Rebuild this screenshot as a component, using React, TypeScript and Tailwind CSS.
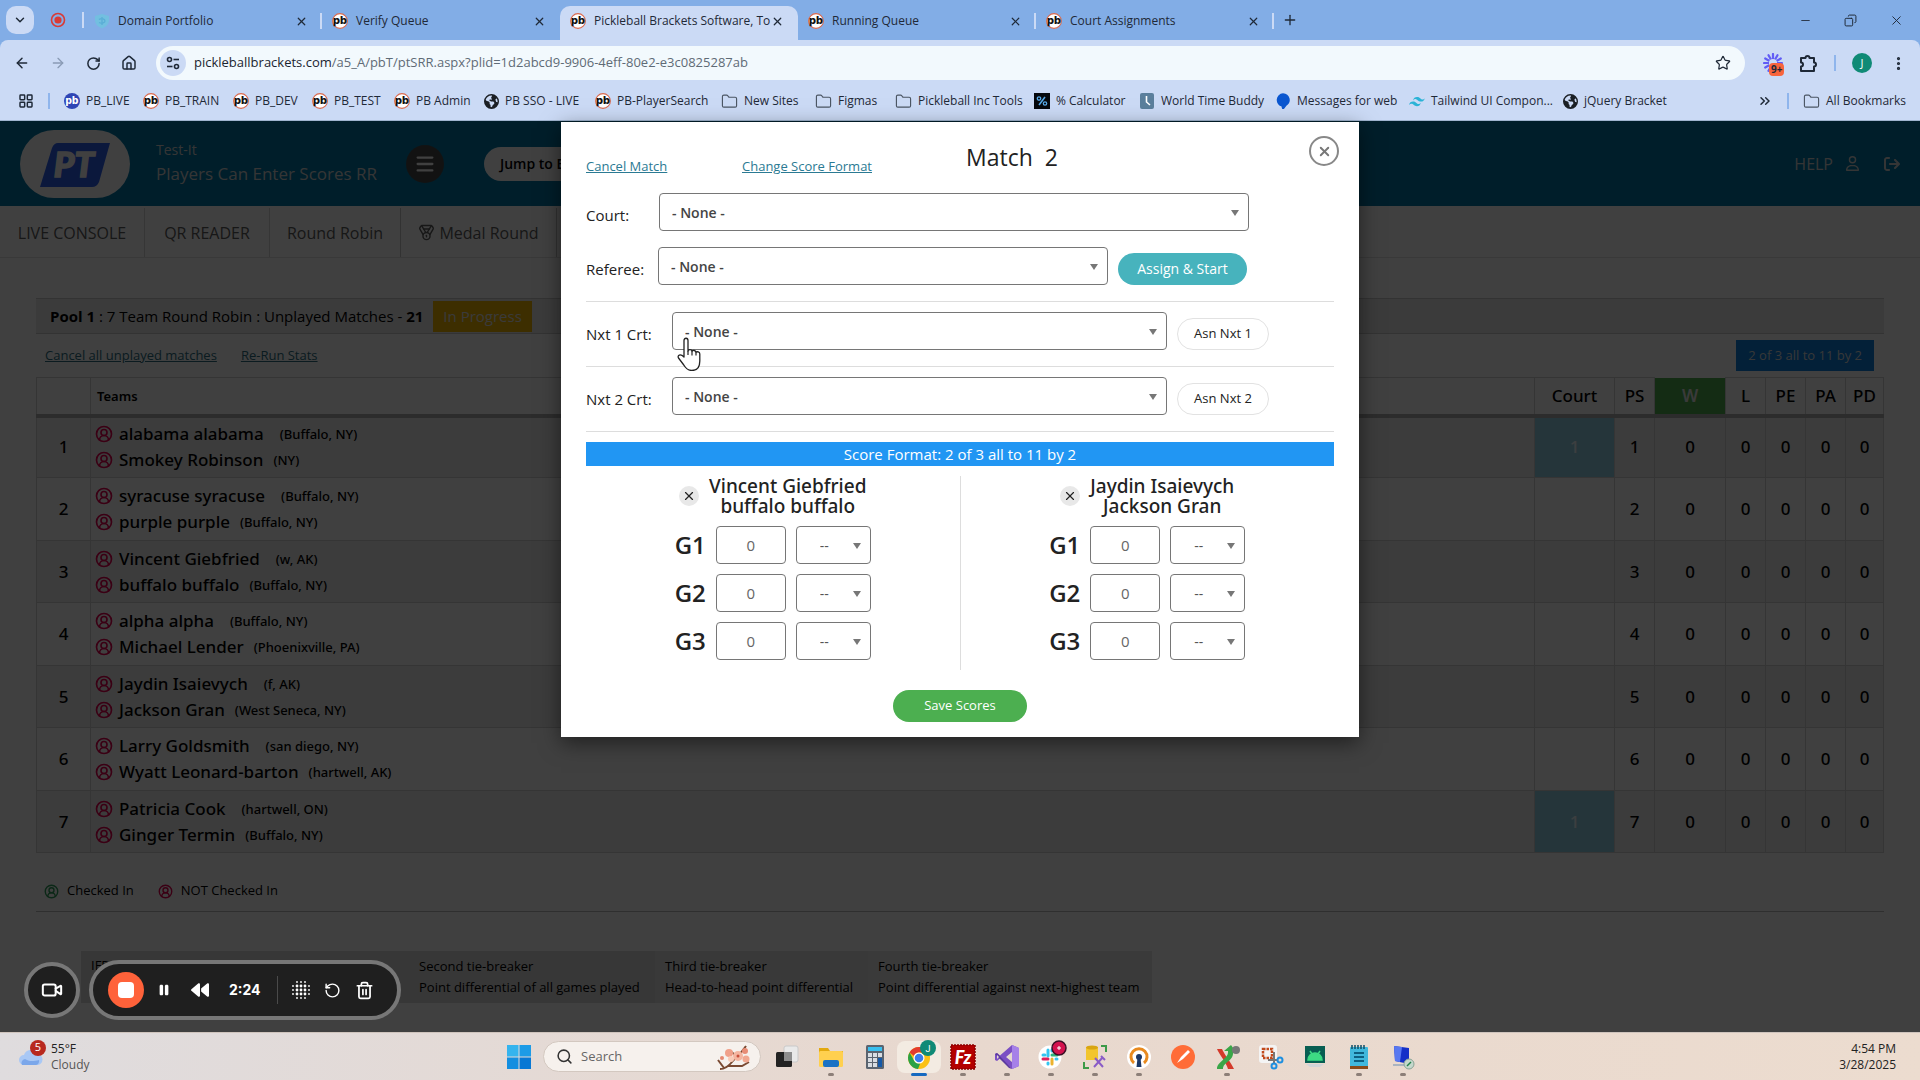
import { useState } from 'react'
import type { ReactNode } from 'react'
import {
  ArrowLeft, ArrowRight, ChevronDown, ChevronsRight, CircleUserRound, Copy, EllipsisVertical, Folder, House,
  LayoutGrid, Medal, Menu, Minus, Plus, RotateCcw, RotateCw, Search, Star, Trash2, Video, X,
} from 'lucide-react'
import { FaArrowRightFromBracket, FaRegUser, FaBackward, FaPause, FaEarthAmericas } from 'react-icons/fa6'

const tabs = [
  { title: 'Domain Portfolio', icon: 'shield' },
  { title: 'Verify Queue', icon: 'pb' },
  { title: 'Pickleball Brackets Software, To', icon: 'pb', active: true },
  { title: 'Running Queue', icon: 'pb' },
  { title: 'Court Assignments', icon: 'pb' },
]

const bookmarks = [
  { label: 'PB_LIVE', icon: 'pblive', w: 'w-[79px]' },
  { label: 'PB_TRAIN', icon: 'pb', w: 'w-[90px]' },
  { label: 'PB_DEV', icon: 'pb', w: 'w-[79px]' },
  { label: 'PB_TEST', icon: 'pb', w: 'w-[82px]' },
  { label: 'PB Admin', icon: 'pb', w: 'w-[90px]' },
  { label: 'PB SSO - LIVE', icon: 'globe', w: 'w-[111px]' },
  { label: 'PB-PlayerSearch', icon: 'pb', w: 'w-[126px]' },
  { label: 'New Sites', icon: 'folder', w: 'w-[94px]' },
  { label: 'Figmas', icon: 'folder', w: 'w-[80px]' },
  { label: 'Pickleball Inc Tools', icon: 'folder', w: 'w-[139px]' },
  { label: '% Calculator', icon: 'percent', w: 'w-[105px]' },
  { label: 'World Time Buddy', icon: 'clock', w: 'w-[136px]' },
  { label: 'Messages for web', icon: 'messages', w: 'w-[134px]' },
  { label: 'Tailwind UI Compon...', icon: 'tailwind', w: 'w-[154px]' },
  { label: 'jQuery Bracket', icon: 'globe', w: 'w-[110px]' },
]

const teams = [
  { players: [['alabama alabama', '(Buffalo, NY)'], ['Smokey Robinson', '(NY)']], court: '1' },
  { players: [['syracuse syracuse', '(Buffalo, NY)'], ['purple purple', '(Buffalo, NY)']] },
  { players: [['Vincent Giebfried', '(w, AK)'], ['buffalo buffalo', '(Buffalo, NY)']] },
  { players: [['alpha alpha', '(Buffalo, NY)'], ['Michael Lender', '(Phoenixville, PA)']] },
  { players: [['Jaydin Isaievych', '(f, AK)'], ['Jackson Gran', '(West Seneca, NY)']] },
  { players: [['Larry Goldsmith', '(san diego, NY)'], ['Wyatt Leonard-barton', '(hartwell, AK)']] },
  { players: [['Patricia Cook', '(hartwell, ON)'], ['Ginger Termin', '(Buffalo, NY)']], court: '1' },
]

function Favicon({ name }: { name: string }) {
  if (name === 'folder') return <Folder size={17} strokeWidth={1.6} className="shrink-0 text-[#4b5563]" />
  if (name === 'globe') return <FaEarthAmericas size={15} className="shrink-0 text-[#1b1f24]" />
  return (
    <svg width="16" height="16" viewBox="0 0 16 16" className="shrink-0" aria-hidden="true">
      {name === 'pb' && (
        <>
          <circle cx="8" cy="8" r="7.4" fill="#fff" stroke="#d9694f" strokeWidth="1.1" />
          <text x="8" y="11.4" textAnchor="middle" fontFamily="Inter, sans-serif" fontWeight="800" fontSize="11" fill="#111">pb</text>
        </>
      )}
      {name === 'pblive' && (
        <>
          <circle cx="8" cy="8" r="8" fill="#2f45b5" />
          <text x="8" y="11.4" textAnchor="middle" fontFamily="Inter, sans-serif" fontWeight="800" fontSize="10" fill="#fff">pb</text>
        </>
      )}
      {name === 'shield' && (
        <>
          <path d="M1 3l7-2 7 2v4c0 4-3 7-7 8.500C4 14 1 11 1 7z" fill="#72bfe0" />
          <path d="M8 4v8M5 6.500c3-2 6 0 6 1.500s-3 3-6 1.500" stroke="#5aaed6" strokeWidth="1.300" fill="none" />
        </>
      )}
      {name === 'percent' && (
        <>
          <rect width="16" height="16" fill="#05080d" />
          <path d="M5 12L11 4" stroke="#58a9e8" strokeWidth="1.500" />
          <circle cx="5" cy="5.500" r="1.700" stroke="#58a9e8" strokeWidth="1.300" fill="none" />
          <circle cx="11" cy="10.500" r="1.700" stroke="#58a9e8" strokeWidth="1.300" fill="none" />
        </>
      )}
      {name === 'clock' && (
        <>
          <rect x="1" width="14" height="16" rx="2" fill="#5b7f9c" />
          <path d="M7.500 3v6l3.500 3" stroke="#fff" strokeWidth="1.600" fill="none" />
        </>
      )}
      {name === 'messages' && <path d="M8 1a6.500 6 0 0 1 3 11L8 16l-1-3.200A6 6 0 0 1 8 1z" fill="#0b57d0" stroke="#0b57d0" strokeWidth="1.500" strokeLinejoin="round" />}
      {name === 'tailwind' && (
        <path d="M4 7.500C4.500 5 6 4 8 4c3 0 3.200 2 5 2.400 1 .3 2-.1 2.800-1.200C15.200 7.500 14 8.600 12 8.600c-3 0-3.200-2-5-2.400-1-.3-2 .2-3 1.300zM0 12c.5-2.400 2-3.500 4-3.500 3 0 3.200 2 5 2.400 1 .3 2-.1 2.800-1.200-.6 2.400-1.800 3.500-3.800 3.500-3 0-3.200-2-5-2.400-1-.3-2 .1-3 1.200z" fill="#2bb3d6" />
      )}
    </svg>
  )
}

function BrowserChrome() {
  return (
    <header className="bg-[#82ade6] text-[#1f2937]">
      <div className="flex h-10 items-end">
        <div className="flex h-10 w-[84px] shrink-0 items-center gap-4 pl-1.5">
          <button aria-label="Search tabs" className="flex h-7 w-7 items-center justify-center rounded-[10px] bg-[#cbdaf5]">
            <ChevronDown size={14} strokeWidth={2.5} />
          </button>
          <svg width="16" height="16" viewBox="0 0 16 16" aria-hidden="true">
            <circle cx="8" cy="8" r="6.500" fill="none" stroke="#d93a35" strokeWidth="1.600" />
            <circle cx="8" cy="8" r="3.600" fill="#d93a35" />
          </svg>
          <span className="h-4 w-0.5 bg-[#cbdaf5]" />
        </div>
        {tabs.map((t, i) => (
          <div key={t.title}
            className={t.active
              ? 'flex h-[34px] w-[238px] items-center rounded-t-[10px] bg-[#cbdaf5] pr-3.5 pb-1 pl-2.5'
              : 'flex h-[34px] w-[238px] items-center pr-3.5 pb-1 pl-2.5'}>
            <Favicon name={t.icon} />
            <span className="ml-2 min-w-0 flex-1 text-xs whitespace-nowrap">{t.title}</span>
            <button aria-label={'Close ' + t.title}><X size={13} strokeWidth={2.2} /></button>
            {(i === 0 || i > 2) && <span className="-mr-3.5 ml-3 h-4 w-0.5 bg-[#cbdaf5]" />}
          </div>
        ))}
        <button aria-label="New tab" className="mb-3 ml-2"><Plus size={16} /></button>
        <div className="ml-auto flex h-10 items-center gap-8 pr-4">
          <button aria-label="Minimize"><Minus size={13} strokeWidth={1.6} /></button>
          <button aria-label="Restore"><Copy size={13} strokeWidth={1.800} className="-scale-x-100" /></button>
          <button aria-label="Close"><X size={15} strokeWidth={1.500} /></button>
        </div>
      </div>

      <div className="border-b border-[#9fb4cf] bg-[#cbdaf5] rounded-t-lg">
        <div className="flex h-[46px] items-center pl-3.5">
          <div className="flex w-[142px] items-center gap-5">
            <button aria-label="Back"><ArrowLeft size={16} strokeWidth={2.2} /></button>
            <button aria-label="Forward"><ArrowRight size={16} className="text-[#8a9bb5]" /></button>
            <button aria-label="Reload"><RotateCw size={15} strokeWidth={2.4} /></button>
            <button aria-label="Home"><House size={16} strokeWidth={2.2} /></button>
          </div>
          <div className="flex h-[34px] flex-1 items-center gap-2 rounded-full bg-[#f2f9fd] pr-3.5 pl-1">
            <span className="flex h-[26px] w-[26px] items-center justify-center rounded-full bg-[#cbdaf5]">
              <svg width="14" height="14" viewBox="0 0 14 14" fill="none" stroke="#1f2937" strokeWidth="1.600" aria-hidden="true">
                <circle cx="3.500" cy="3.500" r="2" /><path d="M7.500 3.500H13" /><circle cx="10.500" cy="10.500" r="2" /><path d="M1 10.500h5.500" />
              </svg>
            </span>
            <div className="flex-1 text-[13px] text-[#5f6b76]">
              <span className="text-[#1b2530]">pickleballbrackets.com</span>/a5_A/pbT/ptSRR.aspx?plid=1d2abcd9-9906-4eff-80e2-e3c0825287ab
            </div>
            <button aria-label="Bookmark"><Star size={16} strokeWidth={1.800} /></button>
          </div>
          <div className="flex w-[175px] items-center pl-[18px]">
            <div className="relative mr-4">
              <svg width="20" height="20" viewBox="0 0 20 20" stroke="#625df5" strokeWidth="2.200" strokeLinecap="round" aria-hidden="true">
                <path d="M10 1v18M1 10h18M5.500 2.200l9 15.600M14.500 2.200l-9 15.600M2.200 5.500l15.600 9M17.800 5.500l-15.600 9" />
                <circle cx="10" cy="10" r="3" fill="#cbdaf5" stroke="#cbdaf5" />
              </svg>
              <span className="absolute top-2.5 left-1.5 rounded bg-[#f8643c] px-0.5 text-[10px] leading-[13px] font-bold">9+</span>
            </div>
            <button aria-label="Extensions">
              <svg width="19" height="19" viewBox="0 0 19 19" fill="none" stroke="#1f2937" strokeWidth="2" strokeLinejoin="round" aria-hidden="true">
                <path d="M2 4h4.500a2 2 0 1 1 4 0H15v4.500a2 2 0 1 1 0 4V17H2v-4.500a2 2 0 1 0 0-4z" />
              </svg>
            </button>
            <span className="mx-4 h-4 w-0.5 bg-[#8fb5ec]" />
            <button aria-label="Profile" className="h-5 w-5 rounded-full bg-[#0f8a76] text-[11px] text-white">J</button>
            <button aria-label="More" className="ml-[18px]"><EllipsisVertical size={17} strokeWidth={2.500} /></button>
          </div>
        </div>
        <nav className="flex h-[34px] items-center pb-1 pl-[18px] text-xs whitespace-nowrap">
          <LayoutGrid size={16} strokeWidth={2.200} />
          <span className="mr-3.5 ml-3.5 h-4 w-0.5 bg-[#8fb5ec]" />
          {bookmarks.map(b => (
            <a key={b.label} href="#" className={'flex items-center gap-1.5 ' + b.w}>
              <Favicon name={b.icon} />{b.label}
            </a>
          ))}
          <div className="ml-auto flex items-center pr-3.5">
            <ChevronsRight size={16} strokeWidth={2.200} />
            <span className="mx-3.5 h-4 w-0.5 bg-[#8fb5ec]" />
            <a href="#" className="flex items-center gap-1.5"><Favicon name="folder" />All Bookmarks</a>
          </div>
        </nav>
      </div>
    </header>
  )
}

function PlayerLine({ name, place, wide }: { name: string; place: string; wide: boolean }) {
  return (
    <div className="flex h-[26px] items-center">
      <CircleUserRound size={18} strokeWidth={2.200} className="mr-1.5 shrink-0 text-[#e6004f]" />
      <span>{name}</span>
      <span className={wide ? 'ml-4 text-[13px]' : 'ml-2.5 text-[13px]'}>{place}</span>
    </div>
  )
}

const cell = 'border border-[#d4d4d4] text-center'

function PoolTable() {
  return (
    <table className="w-full table-fixed border-collapse font-['Noto_Sans','Open_Sans',sans-serif] text-[17px] leading-6 font-medium text-black">
      <colgroup>
        <col className="w-[54px]" /><col /><col className="w-20" /><col className="w-10" /><col className="w-[71px]" />
        <col className="w-10" /><col className="w-10" /><col className="w-10" /><col className="w-[38px]" />
      </colgroup>
      <thead>
        <tr className="h-[38px] border-b-4 border-[#b0b0b0]">
          <th className={cell} />
          <th className="border border-[#d4d4d4] px-1.5 text-left text-[13px] font-semibold">Teams</th>
          <th className="border border-[#d4d4d4] font-medium">Court</th>
          <th className="border border-[#d4d4d4] font-medium">PS</th>
          <th className="bg-[#4fae4f] font-semibold text-[#e8e8e8]">W</th>
          <th className="border border-[#d4d4d4] font-medium">L</th>
          <th className="border border-[#d4d4d4] font-medium">PE</th>
          <th className="border border-[#d4d4d4] font-medium">PA</th>
          <th className="border border-[#d4d4d4] font-medium">PD</th>
        </tr>
      </thead>
      <tbody>
        {teams.map((t, i) => (
          <tr key={i} className="h-[62px] odd:bg-[#f0f0f0] even:h-[63px]">
            <td className={cell}>{i + 1}</td>
            <td className="border border-[#d4d4d4] pl-1">
              {t.players.map(([name, place], j) => <PlayerLine key={name} name={name} place={place} wide={j === 0} />)}
            </td>
            <td className={t.court ? 'border border-[#d4d4d4] bg-[#94d3e6] text-center text-[#eefaff]' : cell}>{t.court}</td>
            <td className={cell}>{i + 1}</td>
            <td className={cell}>0</td>
            <td className={cell}>0</td>
            <td className={cell}>0</td>
            <td className={cell}>0</td>
            <td className={cell}>0</td>
          </tr>
        ))}
      </tbody>
    </table>
  )
}

function PoolPage() {
  return (
    <div className="bg-white text-black">
      <div className="flex h-[85px] items-center bg-[#0078a8] pr-5 pl-5 text-[#d4d4d4]">
        <svg width="110" height="68" viewBox="0 0 110 68" role="img" aria-label="PT">
          <rect width="110" height="68" rx="34" fill="#fff" />
          <path d="M38 13h52L79 52q-2 5-7 5H20L32 18q2-5 6-5z" fill="#2c60f0" />
          <text x="54" y="47" textAnchor="middle" fontFamily="Lato, sans-serif" fontWeight="900" fontStyle="italic" fontSize="35" fill="#fff" stroke="#fff" strokeWidth="1.500">PT</text>
        </svg>
        <div className="ml-[26px] w-[250px]">
          <p className="text-sm leading-5">Test-It</p>
          <p className="text-[17px] leading-[28px]">Players Can Enter Scores RR</p>
        </div>
        <button aria-label="Menu" className="flex h-[38px] w-[38px] items-center justify-center rounded-full bg-[#4a4a4a] text-white"><Menu size={22} strokeWidth={2.500} /></button>
        <button className="ml-10 h-[34px] rounded-full bg-white px-4 text-sm font-semibold text-black">Jump to Event</button>
        <a href="#" className="ml-auto">HELP</a>
        <FaRegUser size={15} className="ml-3" />
        <FaArrowRightFromBracket size={16} className="ml-6" />
      </div>

      <nav className="flex h-[52px] border-b border-[#e4e4e4] pt-0.5 text-[#5c5c5c]">
        <a href="#" className="flex w-[145px] items-center justify-center border-r border-[#d8d8d8]">LIVE CONSOLE</a>
        <a href="#" className="flex w-[125px] items-center justify-center border-r border-[#d8d8d8]">QR READER</a>
        <a href="#" className="flex w-[131px] items-center justify-center border-r border-[#c8c8c8]">Round Robin</a>
        <a href="#" className="flex w-[156px] items-center justify-center gap-1 border-r border-[#c8c8c8]"><Medal size={17} />Medal Round</a>
      </nav>

      <div className="px-9 pt-10">
        <div className="flex h-9 items-center border-y border-[#ccc] bg-[#ebebeb] pl-3.5 text-[15px]">
          <h2><b>Pool 1</b> : 7 Team Round Robin : Unplayed Matches - <b>21</b></h2>
          <span className="ml-2.5 flex h-[31px] items-center bg-[#f2b600] px-2.5 text-[#e6e6e6]">In Progress</span>
        </div>
        <div className="flex h-[43px] items-center gap-6 pr-2.5 pl-[9px] text-[13px] text-[#2c6d80]">
          <a href="#" className="underline">Cancel all unplayed matches</a>
          <a href="#" className="underline">Re-Run Stats</a>
          <span className="ml-auto flex h-[31px] items-center bg-[#0c80e0] px-3 text-[#dcdcdc]">2 of 3 all to 11 by 2</span>
        </div>
        <PoolTable />
        <div className="flex h-[59px] items-center border-b border-[#bbb] pt-[18px] pl-2 text-[13px]">
          <CircleUserRound size={15} strokeWidth={2.200} className="mr-2 text-[#2f9e5b]" />Checked In
          <CircleUserRound size={15} strokeWidth={2.200} className="mr-2 ml-6 text-[#e6004f]" />NOT Checked In
        </div>
        <table className="mt-[39px] ml-[45px] h-[52px] bg-[#dadada] text-[13px] leading-[21px]">
          <tbody>
            <tr>
              <td className="w-[135px] px-2.5 py-1 align-top">IFP Standard</td>
              <td className="w-[193px] px-2.5 py-1 align-top">First tie-breaker</td>
              <td className="w-[246px] px-2.5">Second tie-breaker<br />Point differential of all games played</td>
              <td className="w-[213px] bg-[#e2e2e2] px-2.5">Third tie-breaker<br />Head-to-head point differential</td>
              <td className="w-[284px] bg-[#e6e6e6] px-2.5">Fourth tie-breaker<br />Point differential against next-highest team</td>
            </tr>
          </tbody>
        </table>
      </div>
    </div>
  )
}

function Dropdown({ id, width, small }: { id: string; width: string; small?: boolean }) {
  return (
    <div className={'relative ' + width}>
      <select id={id} aria-label={id}
        className={small
          ? 'h-[38px] w-full appearance-none rounded border border-[#767676] bg-white pt-0.5 pl-[23px] text-sm text-[#555]'
          : 'h-[38px] w-full appearance-none rounded border border-[#767676] bg-white px-3 pt-0.5 text-sm font-semibold text-[#444]'}>
        <option>{small ? '--' : '- None -'}</option>
      </select>
      <span className="pointer-events-none absolute top-[17px] right-2.5 border-x-4 border-t-[6px] border-x-transparent border-t-[#777]" />
    </div>
  )
}

function ScoreSide({ players, side }: { players: string[]; side: string }) {
  const [scores, setScores] = useState(['0', '0', '0'])
  return (
    <div className="flex flex-1 flex-col items-center">
      <div className="flex items-center gap-2.5">
        <button aria-label={'Remove ' + players[0]} className="flex h-5 w-5 items-center justify-center rounded-full bg-[#e8e8e8]"><X size={14} /></button>
        <div className="text-center font-['Noto_Sans','Open_Sans',sans-serif] text-[19px] leading-5 font-medium">
          {players.map(p => <p key={p}>{p}</p>)}
        </div>
      </div>
      {scores.map((s, i) => (
        <div key={i} className="mt-2.5 flex items-center gap-2.5">
          <label htmlFor={side + i} className="text-2xl font-semibold">G{i + 1}</label>
          <input id={side + i} value={s}
            onChange={e => setScores(scores.map((v, j) => (j === i ? e.target.value : v)))}
            className="h-[38px] w-[70px] rounded border border-[#767676] text-center text-[15px] text-[#666]" />
          <Dropdown id={side + '-result-' + (i + 1)} width="w-[75px]" small />
        </div>
      ))}
    </div>
  )
}

function FormRow({ label, id, gap, children, width }: { label: string; id: string; gap: string; width: string; children?: ReactNode }) {
  return (
    <div className="flex items-start">
      <label htmlFor={id} className={'pt-2.5 text-[15px] leading-6 ' + gap}>{label}</label>
      <Dropdown id={id} width={width} />
      {children}
    </div>
  )
}

function MatchDialog() {
  return (
    <div role="dialog" aria-label="Match 2" className="relative w-[798px] bg-white px-[25px] pb-[15px] text-[#222] shadow-[0_6px_20px_rgba(0,0,0,0.5)]">
      <div className="flex h-[71px] items-center text-[13px] text-[#2b7a93]">
        <a href="#" className="w-[156px] pt-[18px] underline">Cancel Match</a>
        <a href="#" className="w-[224px] pt-[18px] underline">Change Score Format</a>
        <h1 className="text-[23px] text-[#222]">Match&nbsp; 2</h1>
      </div>
      <button aria-label="Close" className="absolute top-3.5 right-5 flex h-[30px] w-[30px] items-center justify-center rounded-full border-2 border-[#888] text-[#777]"><X size={15} strokeWidth={3} /></button>

      <FormRow label="Court:" id="court" gap="w-[73px]" width="w-[590px]" />
      <div className="h-4" />
      <FormRow label="Referee:" id="referee" gap="w-[72px]" width="w-[450px]">
        <button className="mt-1.5 ml-2.5 h-8 w-[129px] rounded-full bg-[#47b3bd] text-sm text-white">Assign &amp; Start</button>
      </FormRow>
      <hr className="my-2.5 mt-4 border-[#ddd]" />
      <FormRow label="Nxt 1 Crt:" id="next-1" gap="w-[86px]" width="w-[495px]">
        <button className="mt-1.5 ml-2.5 h-8 w-[92px] rounded-full border border-[#e2e2e2] text-[13px]">Asn Nxt 1</button>
      </FormRow>
      <hr className="my-2.5 mt-4 border-[#ddd]" />
      <FormRow label="Nxt 2 Crt:" id="next-2" gap="w-[86px]" width="w-[495px]">
        <button className="mt-1.5 ml-2.5 h-8 w-[92px] rounded-full border border-[#e2e2e2] text-[13px]">Asn Nxt 2</button>
      </FormRow>
      <hr className="my-2.5 mt-4 border-[#ddd]" />

      <p className="bg-[#2196f3] text-center text-[15px] leading-6 text-white">Score Format: 2 of 3 all to 11 by 2</p>
      <div className="mt-2.5 flex h-[194px] divide-x divide-[#ddd]">
        <ScoreSide side="left" players={['Vincent Giebfried', 'buffalo buffalo']} />
        <ScoreSide side="right" players={['Jaydin Isaievych', 'Jackson Gran']} />
      </div>
      <div className="mt-5 flex justify-center">
        <button className="h-8 w-[134px] rounded-full bg-[#4caf50] text-[13px] text-white">Save Scores</button>
      </div>

      {/* hand pointer resting on the first "next court" list */}
      <svg width="28" height="34" viewBox="0 0 28 34" className="absolute top-[215px] left-[114px]" aria-hidden="true">
        <path d="M9 20V3.500c0-3 4-3 4 0V14c.5-2 4-1.800 4 .5 .8-1.800 4-1.200 4 1 1-1.500 3.800-.6 3.800 1.500v7c0 6-3 9.500-8 9.500-4 0-6-2-8-5.500L3.500 21c-1.500-3 2-4.500 5.500-1z" fill="#fff" stroke="#222" strokeWidth="1.300" strokeLinejoin="round" />
        <path d="M13 14v4M17 14.500v4M21 15.500v3" stroke="#222" strokeWidth="1.200" />
      </svg>
    </div>
  )
}

function Recorder() {
  return (
    <div className="absolute bottom-3 left-6 flex items-center gap-[9px] text-white">
      <button aria-label="Camera" className="flex h-14 w-14 items-center justify-center rounded-full border-4 border-[#777] bg-[#1f1f1f]"><Video size={22} strokeWidth={2.200} /></button>
      <div className="flex h-[60px] w-[312px] items-center rounded-full border-4 border-[#777] bg-[#1f1f1f] pl-[15px]">
        <button aria-label="Stop" className="flex h-9 w-9 items-center justify-center rounded-full bg-[#ff623a]"><span className="h-4 w-4 rounded-sm bg-white" /></button>
        <button aria-label="Pause" className="ml-[13px]"><FaPause size={14} /></button>
        <button aria-label="Rewind" className="ml-5"><FaBackward size={18} /></button>
        <span className="ml-5 w-8 font-[Inter] text-sm font-bold">2:24</span>
        <span className="mr-3.5 ml-4 h-7 w-px bg-[#4a4a4a]" />
        <svg width="18" height="18" viewBox="0 0 18 18" fill="#fff" aria-hidden="true">
          {[1, 5, 9, 13, 17].map(x => [1, 5, 9, 13, 17].map(y => {
            const edge = x === 1 || x === 17 || y === 1 || y === 17
            const corner = Math.abs(x - 9) + Math.abs(y - 9) > 12
            return corner ? null : <circle key={x + '-' + y} cx={x} cy={y} r={edge ? 0.9 : 1.4} />
          }))}
        </svg>
        <button aria-label="Restart" className="ml-3.5"><RotateCcw size={17} strokeWidth={2} /></button>
        <button aria-label="Delete" className="ml-3.5"><Trash2 size={19} strokeWidth={2.200} /></button>
      </div>
    </div>
  )
}

const apps: { name: string; running?: boolean; active?: boolean; art: ReactNode }[] = [
  { name: 'Task view', art: <><rect x="9" y="1" width="14" height="16" rx="2" fill="#e9e9e9" stroke="#c9c9c9" /><rect x="1" y="7" width="16" height="15" rx="1.500" fill="#222" /><rect x="9" y="7" width="8" height="9" fill="#8d8d8d" /></> },
  { name: 'File Explorer', running: true, art: <><path d="M0 3h9l2 3h13v15H0z" fill="#e3a90f" /><rect y="6" width="24" height="16" rx="1.500" fill="#ffd04f" /><rect x="4" y="15" width="16" height="7" rx="2" fill="#1a72c4" /></> },
  { name: 'Calculator', art: <><rect x="3" width="18" height="24" rx="1.500" fill="#5a6470" /><rect x="5" y="2" width="14" height="4" fill="#39c0f0" /><path d="M5 8h4v4H5zM10 8h4v4h-4zM15 8h4v4h-4zM5 13h4v4H5zM10 13h4v4h-4zM5 18h4v4H5zM10 18h4v4h-4z" fill="#d8dde3" /><path d="M15 13h4v9h-4z" fill="#1559a8" /></> },
  { name: 'Chrome', running: true, active: true, art: <><circle cx="12" cy="13" r="11" fill="#fbc116" /><path d="M12 2a11 11 0 0 1 9.500 5.500H12a5.500 5.500 0 0 0-5 3.500L2.500 7.500A11 11 0 0 1 12 2z" fill="#e33b2e" /><path d="M2.500 7.500L7.300 16a5.500 5.500 0 0 0 6 2.300L11 24A11 11 0 0 1 2.500 7.500z" fill="#2aa147" /><circle cx="12" cy="13" r="5.500" fill="#fff" /><circle cx="12" cy="13" r="4.300" fill="#3b7ded" /><circle cx="21" cy="3" r="8" fill="#0f8a76" /><text x="21" y="6.500" textAnchor="middle" fontSize="9" fill="#fff" fontFamily="Roboto, sans-serif">J</text></> },
  { name: 'FileZilla', running: true, art: <><rect width="24" height="24" fill="#b30000" stroke="#8a0000" strokeWidth="1.500" strokeDasharray="2 1" /><text x="12" y="19" textAnchor="middle" fontSize="18" fontWeight="900" fontStyle="italic" fill="#fff" fontFamily="Lato, sans-serif">Fz</text></> },
  { name: 'Visual Studio', running: true, art: <><path d="M17 0l7 3v18l-7 3L5 13.500 2 16l-2-1V9l2-1 3 2.500z" fill="#7b4fc4" /><path d="M0 9l2-1L17 24l-3-1z" fill="#5c3a9e" /><path d="M17 7v10l-6-5zM2 10v4l2-2z" fill="#e6d8d0" /><path d="M17 0l7 3v18l-7 3z" fill="#a680e8" /></> },
  { name: 'Slack', running: true, art: <><circle cx="11" cy="12" r="11.500" fill="#fff" /><path d="M9 5v6" stroke="#36c5f0" strokeWidth="3" strokeLinecap="round" /><path d="M13 10h5" stroke="#2eb67d" strokeWidth="3" strokeLinecap="round" /><path d="M13 14v5" stroke="#ecb22e" strokeWidth="3" strokeLinecap="round" /><path d="M4 14h5" stroke="#e01e5a" strokeWidth="3" strokeLinecap="round" /><path d="M4 10h2M13 5v1M9 18v1M17 14h1" stroke="#36c5f0" strokeWidth="3" strokeLinecap="round" /><circle cx="20" cy="3" r="7" fill="#d4124e" stroke="#3b1026" strokeWidth="1.500" /><path d="M20 1v4M18 3h4" stroke="#fff" /></> },
  { name: 'SQL Tools', running: true, art: <><path d="M3 2h12v13H3z" fill="#f2c52c" /><ellipse cx="9" cy="2.500" rx="6" ry="2" fill="#d9a512" /><path d="M18 1h5v6M1 17v6h5" stroke="#3c9a48" strokeWidth="2" fill="none" /><path d="M12 13l8 9M20 12l-9 10M18 11l4 4" stroke="#8a5cc7" strokeWidth="2" /></> },
  { name: 'OpenVPN', running: true, art: <><circle cx="12" cy="12" r="12" fill="#fff" /><path d="M7 18a8 8 0 1 1 10 0" stroke="#e88a1f" strokeWidth="3" fill="none" /><circle cx="12" cy="12" r="3" fill="#1b3766" /><path d="M10.500 13h3l1 9h-5z" fill="#1b3766" /></> },
  { name: 'Postman', art: <><circle cx="12" cy="12" r="12" fill="#ff6c37" /><path d="M6 18l4-6 7-7 2 2-7 7z" fill="#fff" /></> },
  { name: 'Xtool', running: true, art: <><path d="M2 4h5c2 5 10 15 12 20h-6C11 17 4 9 2 4z" fill="#d43a2a" /><path d="M2 24c0-8 12-10 11-18H9l7-6 5 7h-3c1 9-10 10-10 17z" fill="#3aa648" /><circle cx="21" cy="5" r="4" fill="#777" /></> },
  { name: 'Snipping Tool', art: <><rect width="18" height="18" rx="3" fill="#f4f4f4" /><rect x="4" y="4" width="9" height="9" fill="none" stroke="#c24a1c" strokeWidth="2.500" strokeDasharray="2.500 1" /><path d="M15 7v11M9 15h10" stroke="#777" strokeWidth="2" /><circle cx="15" cy="21" r="2.500" fill="none" stroke="#1d8fe0" strokeWidth="2" /><circle cx="21" cy="15" r="2.500" fill="none" stroke="#1d8fe0" strokeWidth="2" /></> },
  { name: 'Emulator', art: <><rect x="2" y="1" width="20" height="17" fill="#075e52" /><path d="M5 15a7 7 0 0 1 14 0zM7 6l2 3M17 6l-2 3" fill="#3ddc84" stroke="#3ddc84" strokeWidth="1.500" /><path d="M3 19h18l-4 3H7z" fill="#d0d4d8" /></> },
  { name: 'Notepad', running: true, art: <><rect x="3" y="2" width="18" height="20" rx="1" fill="#41b8dc" /><path d="M5 0v4M8 0v4M11 0v4M14 0v4M17 0v4" stroke="#114e66" strokeWidth="1.500" /><path d="M7 8h10M7 12h10M7 16h10" stroke="#0d5f80" strokeWidth="1.800" /><path d="M3 21h18v3H3z" fill="#8a4b1a" /></> },
  { name: 'Remote Desktop', running: true, art: <><path d="M3 1l15 2v16L4 16z" fill="#1430c8" /><path d="M3 1l8 1-2 15-5-1z" fill="#5878f0" /><path d="M2 19h12v2H2z" fill="#aab4c0" /><circle cx="18" cy="19" r="5" fill="#c5d8cc" stroke="#8aa396" /><path d="M16 21l4-4" stroke="#22804a" strokeWidth="1.500" /></> },
]

function Taskbar() {
  return (
    <footer className="flex h-12 items-center border-t border-[#cfc4bd] bg-linear-to-r from-[#dfdcde] via-[#e8d8ce] to-[#ecdccf] text-xs text-[#222]">
      <div className="flex flex-1 items-center pl-[18px]">
        <div className="relative mr-2">
          <svg width="25" height="18" viewBox="0 0 25 18" aria-hidden="true"><path d="M6 17a5 5 0 0 1 0-10 7 7 0 0 1 13-1 5.500 5.500 0 0 1 0 11z" fill="#a9c8f5" /><path d="M4 17a4 4 0 0 1 3-6c3 2 7 3 14 1a4 4 0 0 1-3 5z" fill="#7ba7ea" /></svg>
          <span className="absolute -top-2 left-3 flex h-4 w-4 items-center justify-center rounded-full bg-[#b8291f] text-[11px] text-white">5</span>
        </div>
        <div className="leading-4"><p>55°F</p><p className="text-[#555]">Cloudy</p></div>
      </div>
      <div className="flex items-center">
        <button aria-label="Start" className="mr-3 ml-[18px]">
          <svg width="24" height="24" viewBox="0 0 24 24" aria-hidden="true"><path d="M0 0h11.500v11.500H0z" fill="#35b4ee" /><path d="M12.500 0H24v11.500H12.500z" fill="#1d9be6" /><path d="M0 12.500h11.500V24H0z" fill="#138ee0" /><path d="M12.500 12.500H24V24H12.500z" fill="#0878d4" /></svg>
        </button>
        <label className="flex h-[31px] w-[218px] items-center rounded-full border border-[#d3c8c0] bg-[#f6f1ed] pr-1.5 pl-3">
          <Search size={17} strokeWidth={2.200} className="text-[#333]" />
          <input aria-label="Search" placeholder="Search" className="ml-2 w-0 flex-1 bg-transparent text-[13px] placeholder:text-[#666]" />
          <svg width="40" height="26" viewBox="0 0 40 26" aria-hidden="true">
            <path d="M6 25c5 0 8-2 12-7s8-7 14-16M10 24l-6-8M24 13l-8-6M14 22h14l7-4" stroke="#7a4a32" strokeWidth="2" fill="none" />
            <circle cx="15" cy="9" r="4" fill="#f0a08a" /><circle cx="24" cy="12" r="5" fill="#f4b5a0" /><circle cx="31" cy="7" r="3" fill="#e88d76" />
            <circle cx="17" cy="15" r="3" fill="#f8cbb8" /><circle cx="32" cy="15" r="3.500" fill="#f1a790" /><circle cx="8" cy="14" r="2" fill="#e58a72" /><circle cx="24" cy="12" r="1.500" fill="#c94f3b" />
          </svg>
        </label>
        <div className="ml-1 flex">
          {apps.map(a => (
            <button key={a.name} aria-label={a.name} className="flex h-12 w-11 flex-col items-center pt-3">
              <span className={a.active ? 'rounded bg-[#f3ebe2] px-1.5 ring-4 ring-[#f3ebe2]' : ''}>
                <svg width="24" height="24" viewBox="0 0 24 24" className="overflow-visible" aria-hidden="true">{a.art}</svg>
              </span>
              {a.running && <span className={a.active ? 'z-10 mt-1 h-[3px] w-4 shrink-0 rounded bg-[#1769c0]' : 'mt-1 h-[3px] w-1.5 shrink-0 rounded bg-[#8c7f78]'} />}
            </button>
          ))}
        </div>
      </div>
      <div className="flex-1 pr-6 text-right leading-4"><p>4:54 PM</p><p>3/28/2025</p></div>
    </footer>
  )
}

export default function App() {
  return (
    <div className="flex min-h-screen flex-col font-['Open_Sans','Noto_Sans',sans-serif]">
      <BrowserChrome />
      <main className="relative flex-1 bg-white">
        <PoolPage />
        <div className="absolute inset-0 flex items-start justify-center bg-black/75 pt-px">
          <MatchDialog />
        </div>
        <Recorder />
      </main>
      <Taskbar />
    </div>
  )
}
